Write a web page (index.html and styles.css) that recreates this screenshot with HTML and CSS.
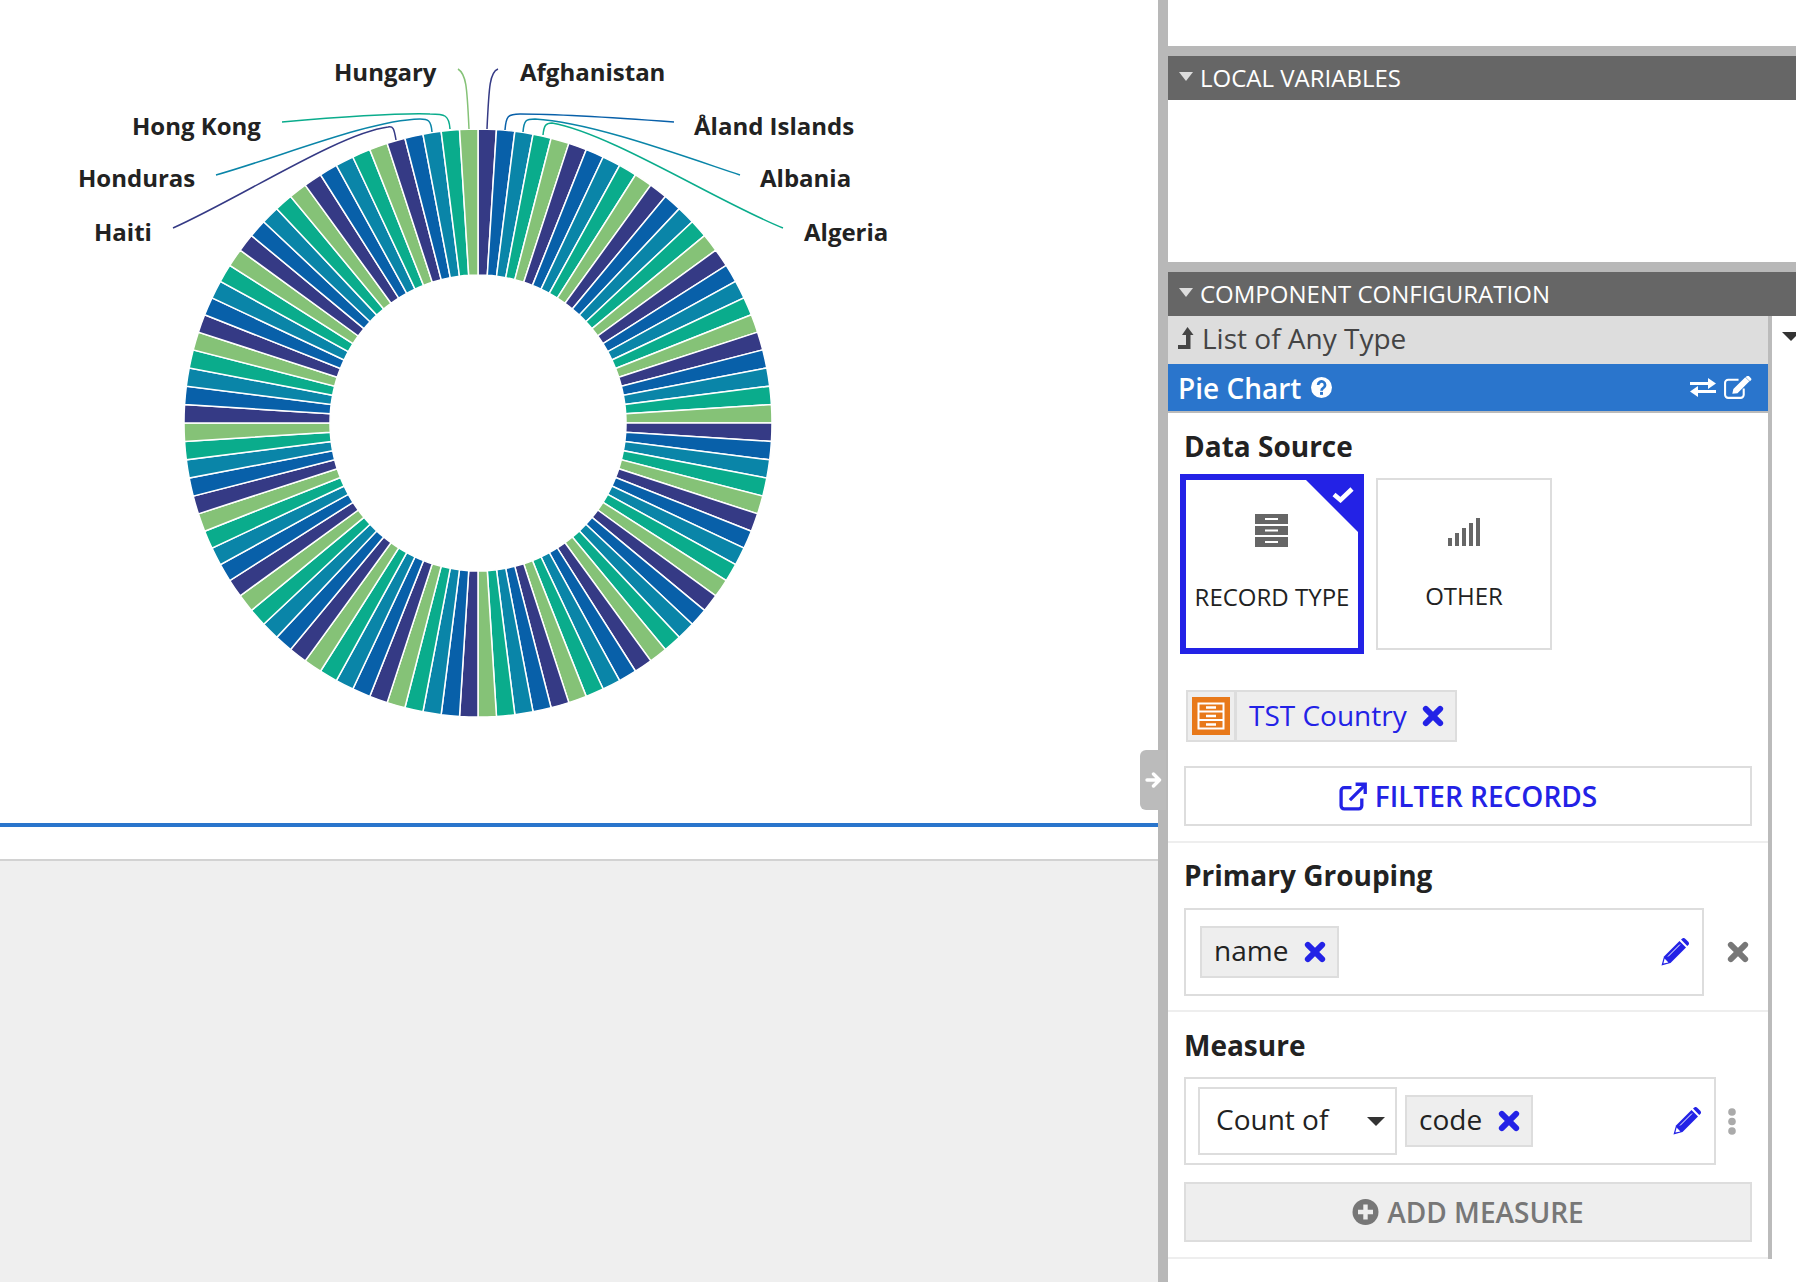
FILE: index.html
```html
<!DOCTYPE html>
<html lang="en">
    <head>
        <meta charset="UTF-8" />
        <meta name="viewport" content="width=device-width, initial-scale=1.0" />

        <link rel="stylesheet" href="styles.css">
        <title>Pie Chart Configuration</title>
    </head>
    <body>
        <svg class="sprite" xmlns="http://www.w3.org/2000/svg">
            <symbol id="icon-x" viewBox="0 0 20 20">
                <path d="M3.500 3.500 16.500 16.500M16.500 3.500 3.500 16.500" fill="none" stroke="currentColor" stroke-width="5.400" stroke-linecap="round" />
            </symbol>
            <symbol id="icon-pencil" viewBox="0 0 28 28">
                <path fill="currentColor" d="M0.500 27.500 3 18.500 18.500 3 25 9.500 9.500 25Z" />
                <path fill="currentColor" d="M20 1.600 21 0.700a2.400 2.400 0 0 1 3.200 0l3.100 3.100a2.400 2.400 0 0 1 0 3.200l-1 1Z" />
                <path fill="#fff" d="M3.600 20.600 2.400 25.600 7.400 24.400Z" />
                <path d="M7 18.500 19 6.500" stroke="#fff" stroke-width="1" />
            </symbol>
        </svg>

        <div class="layout">
            <main class="designer">
                <div class="canvas">
                    <svg class="chart" id="chart" xmlns="http://www.w3.org/2000/svg" width="1158" height="823" viewBox="0 0 1158 823">
                        <g id="slices"></g>
                        <g class="chart__leaders">
                            <path stroke="#85c277" d="M458 69C466 74 467 85 469 129" />
                            <path stroke="#353a85" d="M498 69C490 72 489 85 487 129" />
                            <path stroke="#0aac8c" d="M282 122C340 117 400 113 430 114C445 114 449 115 450 129" />
                            <path stroke="#0a85a8" d="M216 175C280 157 370 120 420 119C428 119 431 120 432 132" />
                            <path stroke="#353a85" d="M173 228C240 198 340 133 388 127C393 126 394 128 396 140" />
                            <path stroke="#0860a9" d="M674 122C620 118 560 114 520 114C508 114 506 116 505 130" />
                            <path stroke="#0a85a8" d="M740 175C680 155 590 122 535 119C526 119 524 120 523 132" />
                            <path stroke="#0aac8c" d="M783 228C720 203 610 133 552 123C546 123 544 125 543 135" />
                        </g>
                        <g class="chart__labels">
                            <text x="334" y="81">Hungary</text>
                            <text x="520" y="81">Afghanistan</text>
                            <text x="132" y="135">Hong Kong</text>
                            <text x="694" y="135">Åland Islands</text>
                            <text x="78" y="187">Honduras</text>
                            <text x="760" y="187">Albania</text>
                            <text x="94" y="241">Haiti</text>
                            <text x="804" y="241">Algeria</text>
                        </g>
                    </svg>
                </div>
                <div class="strip"></div>
                <div class="backdrop"></div>
            </main>

            <div class="collapse-tab">
                <svg width="17" height="16" viewBox="0 0 17 16"><path d="M2 8H14M8.500 2 14.500 8 8.500 14" fill="none" stroke="#fff" stroke-width="3.400" stroke-linecap="round" stroke-linejoin="round" /></svg>
            </div>

            <aside class="side">
                <div class="side__top"></div>

                <section class="pane pane--vars">
                    <h2 class="pane__title"><span class="caret caret--light"></span>LOCAL VARIABLES</h2>
                </section>

                <section class="pane pane--config">
                    <h2 class="pane__title"><span class="caret caret--light"></span>COMPONENT CONFIGURATION</h2>

                    <div class="config">
                        <div class="config__tree">
                            <div class="crumb">
                                <svg class="crumb__icon" width="16" height="22" viewBox="0 0 16 22"><path fill="#444" d="M9.500 0 15.500 8H12.500V22H0V18H8V8H4Z" /></svg>
                                List of Any Type
                            </div>
                            <div class="current">
                                <span class="current__name">Pie Chart</span>
                                <svg class="current__help" width="21" height="21" viewBox="0 0 20 20">
                                    <circle cx="10" cy="10" r="10" fill="#fff" />
                                    <path d="M6.800 7.600a3.300 3.300 0 1 1 5 2.800c-1.200.8-1.800 1.200-1.800 2.600" fill="none" stroke="#2a75cc" stroke-width="2.600" />
                                    <rect x="8.600" y="14.200" width="2.800" height="2.800" fill="#2a75cc" />
                                </svg>
                                <span class="current__tools">
                                    <svg width="26" height="21" viewBox="0 0 26 21"><path fill="#fff" d="M0 5H18V1L26 6.500 18 12V8H0ZM26 13H8V9L0 14.500 8 20V16H26Z" /></svg>
                                    <svg width="29" height="23" viewBox="0 0 28 22">
                                        <path d="M15 3.500H5a3 3 0 0 0-3 3V18a3 3 0 0 0 3 3H17a3 3 0 0 0 3-3V12" fill="none" stroke="#fff" stroke-width="2" />
                                        <path fill="#fff" d="M9 17 10 12.500 21.500 1 25.500 5 14 16.500ZM23 0a1.500 1.500 0 0 1 2 0l2 2a1.500 1.500 0 0 1 0 2l-1 1-4-4Z" />
                                    </svg>
                                </span>
                            </div>

                            <div class="group">
                                <h3 class="group__title">Data Source</h3>
                                <div class="sources">
                                    <div class="source source--active">
                                        <svg class="source__check" width="24" height="17" viewBox="0 0 24 17"><path d="M3 8.500 9.500 14 21 3" fill="none" stroke="#fff" stroke-width="4.600" /></svg>
                                        <svg class="source__icon" width="33" height="33" viewBox="0 0 33 33">
                                            <path fill="#666" d="M0 0H33V10H0ZM0 12H33V21H0ZM0 23H33V33H0Z" />
                                            <path fill="#fff" d="M10 4H23V6H10ZM10 15.500H23V17.500H10ZM10 27H23V29H10Z" />
                                        </svg>
                                        RECORD TYPE
                                    </div>
                                    <div class="source">
                                        <svg class="source__icon" width="33" height="33" viewBox="0 0 33 33">
                                            <path fill="#666" d="M1 25H5V33H1ZM8 20H12V33H8ZM15 15H19V33H15ZM22 10H26V33H22ZM29 5H33V33H29Z" />
                                        </svg>
                                        OTHER
                                    </div>
                                </div>

                                <div class="record-chip">
                                    <span class="record-chip__thumb">
                                        <svg width="38" height="38" viewBox="0 0 38 38">
                                            <rect width="38" height="38" fill="#e8791a" />
                                            <rect x="6.500" y="6.500" width="25" height="25" fill="none" stroke="#fff" stroke-width="2" />
                                            <path d="M6.500 14.500H31.500M6.500 23H31.500" stroke="#fff" stroke-width="2" />
                                            <path d="M14 10.500H24M14 19H24M14 27.500H24" stroke="#fff" stroke-width="2.400" />
                                        </svg>
                                    </span>
                                    <span class="record-chip__label">TST Country</span>
                                    <svg class="icon-x"><use href="#icon-x" /></svg>
                                </div>

                                <button class="wide-btn" type="button">
                                    <svg width="28" height="29" viewBox="0 0 27 28">
                                        <path d="M12 5.500H5a3 3 0 0 0-3 3V23a3 3 0 0 0 3 3H19a3 3 0 0 0 3-3V16M10.500 17.500 24 4" fill="none" stroke="currentColor" stroke-width="3.200" />
                                        <path d="M16 2.200H25.300V11.500" fill="none" stroke="currentColor" stroke-width="3.200" />
                                    </svg>
                                    FILTER RECORDS
                                </button>
                            </div>

                            <div class="group group--grouping">
                                <h3 class="group__title group__title--tight">Primary Grouping</h3>
                                <div class="field-row">
                                    <div class="field">
                                        <span class="chip"><span class="chip__text">name</span><svg class="icon-x"><use href="#icon-x" /></svg></span>
                                        <svg class="icon-pencil"><use href="#icon-pencil" /></svg>
                                    </div>
                                    <svg class="icon-x icon-x--grey"><use href="#icon-x" /></svg>
                                </div>
                            </div>

                            <div class="group">
                                <h3 class="group__title group__title--measure">Measure</h3>
                                <div class="field-row field-row--measure">
                                    <div class="field field--measure">
                                        <span class="select"><span class="chip__text">Count of</span><span class="caret caret--wide"></span></span>
                                        <span class="chip"><span class="chip__text">code</span><svg class="icon-x"><use href="#icon-x" /></svg></span>
                                        <svg class="icon-pencil"><use href="#icon-pencil" /></svg>
                                    </div>
                                    <svg class="kebab" width="8" height="27" viewBox="0 0 8 27"><circle cx="4" cy="4" r="3.800" /><circle cx="4" cy="13.500" r="3.800" /><circle cx="4" cy="23" r="3.800" /></svg>
                                </div>
                                <button class="wide-btn wide-btn--muted" type="button">
                                    <svg width="27" height="28" viewBox="0 0 27 28">
                                        <circle cx="13.500" cy="14" r="13" fill="#777" />
                                        <path d="M13.500 6.500V21.500M6 14H21" stroke="#eee" stroke-width="4.400" />
                                    </svg>
                                    ADD MEASURE
                                </button>
                            </div>
                        </div>

                        <div class="config__gutter"><span class="caret caret--wide"></span></div>
                    </div>
                </section>
            </aside>
        </div>

        <script src="chart.js"></script>
    </body>
</html>
```

FILE: styles.css
```css
*,
*::before,
*::after {
    box-sizing: border-box;
}

body,
h2,
h3 {
    margin: 0;
}

body {
    height: 100vh;
    overflow: hidden;
    background: #fff;
    color: #222;
    font-family: 'Open Sans', 'Noto Sans', sans-serif;
}

.sprite {
    display: none;
}

.layout {
    position: relative;
    display: flex;
    height: 100%;
}

/* left side: the design canvas */

.designer {
    display: flex;
    flex-direction: column;
    flex: 0 0 1158px;
}

.canvas {
    height: 827px;
    border-bottom: 4px solid #2a75cc;
}

.chart {
    display: block;
}

.chart__leaders path {
    fill: none;
    stroke-width: 1.5;
}

.chart__labels text {
    fill: #222;
    font-family: 'Open Sans', sans-serif;
    font-size: 24px;
    font-weight: 700;
}

.strip {
    height: 34px;
    border-bottom: 2px solid #d2d2d2;
}

.backdrop {
    flex: 1;
    background: #efefef;
}

.collapse-tab {
    position: absolute;
    top: 750px;
    left: 1140px;
    display: flex;
    align-items: center;
    justify-content: flex-end;
    width: 26px;
    height: 60px;
    padding-right: 4px;
    background: #bbb;
    border-radius: 6px 0 0 6px;
}

/* right side: the panes */

.side {
    flex: 1;
    min-width: 0;
    border-left: 10px solid #b8b8b8;
}

.side__top {
    height: 46px;
}

.pane {
    border-top: 10px solid #b8b8b8;
}

.pane--vars {
    height: 216px;
}

.pane__title {
    display: flex;
    align-items: center;
    height: 44px;
    padding: 0 0 2px 11px;
    background: #666;
    color: #fff;
    font-size: 24px;
    font-weight: 400;
}

.caret {
    display: inline-block;
    width: 0;
    height: 0;
    border-style: solid;
    border-width: 9px 7px 0;
    border-color: #333 transparent transparent;
}

.caret--light {
    margin: -1px 7px 0 0;
    border-top-color: #ddd;
}

.caret--wide {
    border-width: 9px 9px 0;
}

.config {
    display: flex;
}

.config__tree {
    flex: 0 0 604px;
    border-right: 4px solid #bbb;
}

.config__gutter {
    flex: 1;
    padding: 8px 0 0 10px;
}

.crumb {
    display: flex;
    align-items: center;
    gap: 8px;
    height: 48px;
    padding: 0 0 5px 10px;
    background: #ddd;
    color: #444;
    font-size: 28px;
}

.current {
    display: flex;
    align-items: center;
    height: 49px;
    padding: 0 16px 0 10px;
    background: #2a75cc;
    border-bottom: 2px solid #bbb;
    color: #fff;
    font-size: 28px;
    font-weight: 600;
    background-clip: padding-box;
}

.current__help {
    margin-left: 10px;
}

.current__tools {
    display: flex;
    align-items: center;
    gap: 7px;
    margin-left: auto;
}

.group {
    padding: 16px 16px 15px;
    border-bottom: 2px solid #eee;
}

.group--grouping {
    padding-bottom: 14px;
}

.group__title {
    height: 36px;
    margin-bottom: 9px;
    font-size: 28px;
    font-weight: 700;
    line-height: 35px;
}

.group__title--tight {
    margin-bottom: 13px;
    line-height: 33px;
}

.group__title--measure {
    margin-bottom: 13px;
}

.sources {
    display: flex;
    align-items: center;
    gap: 12px;
    margin-left: -4px;
}

.source {
    position: relative;
    display: flex;
    flex-direction: column;
    align-items: center;
    width: 176px;
    height: 172px;
    padding-top: 33px;
    border: 2px solid #ddd;
    font-size: 24px;
}

.source__icon {
    margin: 0 2px 33px 0;
}

.source--active {
    width: 184px;
    height: 180px;
    padding-top: 34px;
    border: 6px solid #2322e6;
}

.source--active::before {
    content: '';
    position: absolute;
    top: 0;
    right: 0;
    border-style: solid;
    border-width: 0 52px 52px 0;
    border-color: transparent #2322e6 transparent transparent;
}

.source__check {
    position: absolute;
    top: 6px;
    right: 3px;
}

.record-chip {
    display: inline-flex;
    align-items: center;
    height: 52px;
    margin: 36px 0 0 2px;
    padding-right: 11px;
    background: #eee;
    border: 2px solid #ddd;
}

.record-chip__thumb {
    display: flex;
    align-items: center;
    height: 100%;
    padding: 0 4px;
    border-right: 3px solid #ddd;
}

.record-chip__label {
    margin: 0 15px 0 12px;
    padding-bottom: 2px;
    color: #2322e6;
    font-size: 28px;
}

.icon-x {
    flex: none;
    width: 22px;
    height: 22px;
    color: #2322e6;
}

.icon-x--grey {
    color: #777;
}

.icon-pencil {
    flex: none;
    width: 28px;
    height: 28px;
    margin-left: auto;
    color: #2322e6;
}

.wide-btn {
    display: flex;
    align-items: center;
    justify-content: center;
    gap: 8px;
    width: 100%;
    height: 60px;
    margin-top: 24px;
    background: #fff;
    border: 2px solid #ddd;
    color: #2322e6;
    font-family: inherit;
    font-size: 28px;
    font-weight: 600;
}

.wide-btn--muted {
    margin-top: 17px;
    background: #eee;
    color: #777;
}

.field-row {
    display: flex;
    align-items: center;
    gap: 23px;
}

.field {
    display: flex;
    align-items: center;
    flex: 0 0 520px;
    height: 88px;
    padding: 0 13px 0 14px;
    border: 2px solid #ddd;
}

.field--measure {
    flex-basis: 532px;
    padding-left: 12px;
    gap: 8px;
}

.field-row--measure {
    gap: 12px;
}

.chip {
    display: inline-flex;
    align-items: center;
    gap: 16px;
    height: 52px;
    padding: 0 11px 0 12px;
    background: #eee;
    border: 2px solid #ddd;
    font-size: 28px;
}

.chip__text {
    padding-bottom: 4px;
}

.select {
    display: flex;
    align-items: center;
    justify-content: space-between;
    width: 199px;
    height: 68px;
    padding: 0 10px 0 16px;
    border: 2px solid #ddd;
    font-size: 28px;
}

.kebab {
    fill: #aaa;
}
```

FILE: chart.js
```js
// draws the donut slices, clockwise from 12 o'clock

const slices = document.getElementById('slices');
const colors = ['#353a85', '#0860a9', '#0a85a8', '#0aac8c', '#85c277'];
const total = 100;
const cx = 478;
const cy = 423;
const outer = 294;
const inner = 148;

const point = (r, a) =>
    `${(cx + r * Math.sin(a)).toFixed(2)} ${(cy - r * Math.cos(a)).toFixed(2)}`;

for (let i = 0; i < total; i++) {
    const a0 = (i / total) * Math.PI * 2;
    const a1 = ((i + 1) / total) * Math.PI * 2;
    const path = document.createElementNS('http://www.w3.org/2000/svg', 'path');

    path.setAttribute(
        'd',
        `M${point(outer, a0)}A${outer} ${outer} 0 0 1 ${point(outer, a1)}` +
            `L${point(inner, a1)}A${inner} ${inner} 0 0 0 ${point(inner, a0)}Z`
    );
    path.setAttribute('fill', colors[i % colors.length]);
    path.setAttribute('stroke', '#fff');
    path.setAttribute('stroke-width', '1.5');
    slices.appendChild(path);
}
```
